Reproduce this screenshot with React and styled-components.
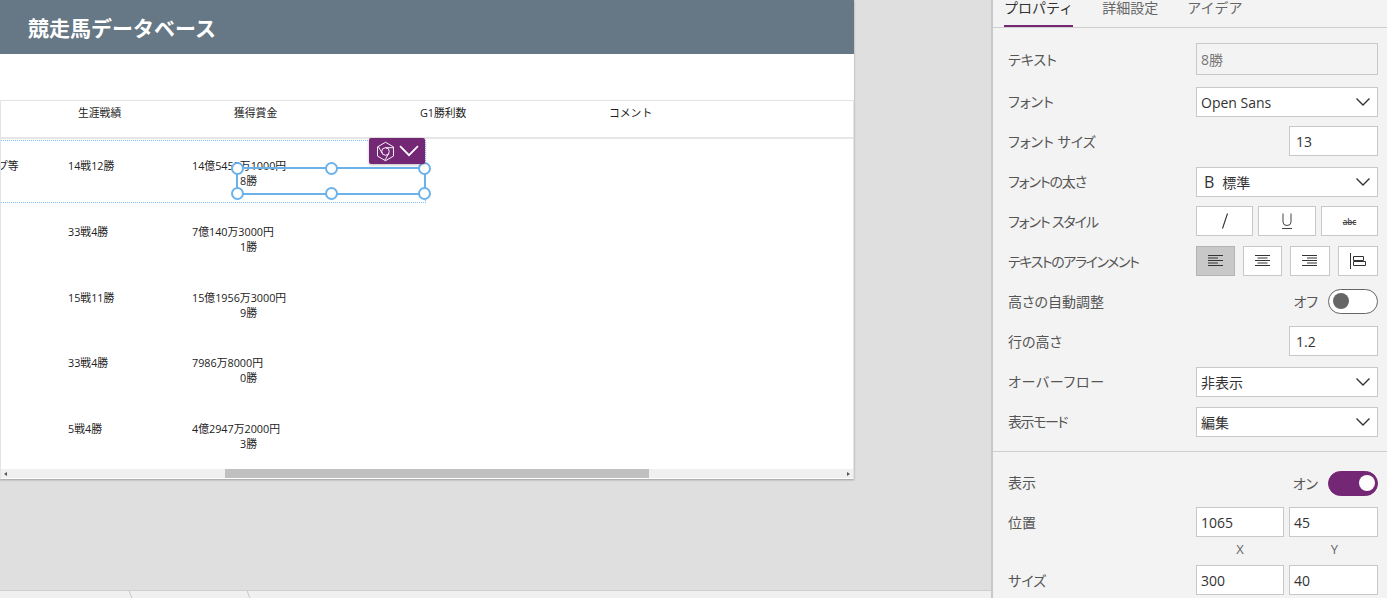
import React from "react";
import styled, { createGlobalStyle } from "styled-components";

const GlobalStyle = createGlobalStyle`
  html, body {
    margin: 0;
    padding: 0;
    height: 100%;
    overflow: hidden;
  }
  body {
    font-family: "Open Sans", "Noto Sans CJK JP", sans-serif;
  }
`;

const horses = [
  { note: "プ等", record: "14戦12勝", money: "14億5455万1000円", wins: "8勝", selected: true },
  { record: "33戦4勝", money: "7億140万3000円", wins: "1勝" },
  { record: "15戦11勝", money: "15億1956万3000円", wins: "9勝" },
  { record: "33戦4勝", money: "7986万8000円", wins: "0勝" },
  { record: "5戦4勝", money: "4億2947万2000円", wins: "3勝" },
];

const Chevron = ({ size = 16, color = "#333", width = 1.4 }) => (
  <svg width={size} height={size} viewBox="0 0 16 16" fill="none">
    <path d="M1.5 4.5 8 11l6.5-6.5" stroke={color} strokeWidth={width} />
  </svg>
);

const AlignIcon = ({ type }) => {
  const lines = {
    left: [[0, 15], [0, 10], [0, 15], [0, 10], [0, 15]],
    center: [[0, 15], [2.5, 12.5], [0, 15], [2.5, 12.5], [0, 15]],
    right: [[0, 15], [5, 15], [0, 15], [5, 15], [0, 15]],
  }[type];
  return (
    <svg width="16" height="14" viewBox="0 0 16 14" fill="none" stroke="#333">
      {lines.map(([a, b], i) => (
        <path key={i} d={`M${a} ${1.5 + i * 2.5}H${b}`} />
      ))}
    </svg>
  );
};

const TopAlignIcon = () => (
  <svg width="17" height="16" viewBox="0 0 17 16" fill="none" stroke="#333">
    <path d="M0.5 0v16M3.5 3.5h10v4h-10zM3.5 8.5h12v4h-12z" />
  </svg>
);

const ItalicIcon = () => (
  <svg width="8" height="16" viewBox="0 0 8 16" fill="none" stroke="#333" strokeWidth="1.1">
    <path d="M6.5 0.5 1.5 15.5" />
  </svg>
);

const UnderlineIcon = () => (
  <svg width="12" height="16" viewBox="0 0 12 16" fill="none" stroke="#444">
    <path d="M2 0.5v8.5q0 3.5 4 3.5t4-3.5V0.5M1 15.5h10" />
  </svg>
);

const BrandIcon = () => (
  <svg width="21" height="21" viewBox="0 0 20 20" fill="none" stroke="#fff" strokeWidth="0.9">
    <path d="M10 1.2 17.6 5.6v8.8L10 18.8 2.4 14.4V5.6z" />
    <circle cx="10" cy="10" r="3.6" />
    <path d="M10 6.4H17.2M6.9 11.8 3.2 5.4M13.1 11.8 9.4 18.3" />
  </svg>
);

export default function App() {
  return (
    <Page>
      <GlobalStyle />
      <Workspace>
        <Screen>
          <Header>競走馬データベース</Header>
          <Gallery>
            <ColumnHeads>
              <HeadCell $w={156}>生涯戦績</HeadCell>
              <HeadCell $w={186}>獲得賞金</HeadCell>
              <HeadCell $w={189}>G1勝利数</HeadCell>
              <HeadCell>コメント</HeadCell>
            </ColumnHeads>
            <Rows>
              {horses.map((h) => (
                <Row key={h.money}>
                  <NoteCell>{h.note}</NoteCell>
                  <RecordCell>{h.record}</RecordCell>
                  <MoneyCell>
                    <div>{h.money}</div>
                    <Wins>{h.wins}</Wins>
                  </MoneyCell>
                  {h.selected && (
                    <>
                      <RowOutline />
                      <Selection>
                        <Handle $x="-1px" $y="-1px" />
                        <Handle $x="50%" $y="-1px" />
                        <Handle $x="100%" $y="-1px" />
                        <Handle $x="-1px" $y="100%" />
                        <Handle $x="50%" $y="100%" />
                        <Handle $x="100%" $y="100%" />
                      </Selection>
                      <Badge>
                        <BrandIcon />
                        <Chevron size={22} color="#fff" width={1.3} />
                      </Badge>
                    </>
                  )}
                </Row>
              ))}
            </Rows>
            <Scrollbar>
              <ArrowLeft />
              <Track>
                <Thumb />
              </Track>
              <ArrowRight />
            </Scrollbar>
          </Gallery>
        </Screen>
        <TabStrip>
          <Tab $w={131} />
          <Tab $w={118} />
        </TabStrip>
      </Workspace>

      <Panel>
        <Tabs>
          <PanelTab $active>プロパティ</PanelTab>
          <PanelTab>詳細設定</PanelTab>
          <PanelTab>アイデア</PanelTab>
        </Tabs>
        <Form>
          <FieldRow $first>
            <Label>テキスト</Label>
            <ReadonlyBox>8勝</ReadonlyBox>
          </FieldRow>
          <FieldRow>
            <Label>フォント</Label>
            <Select>
              Open Sans
              <Chevron />
            </Select>
          </FieldRow>
          <FieldRow>
            <Label>フォント サイズ</Label>
            <NumberBox>13</NumberBox>
          </FieldRow>
          <FieldRow>
            <Label $ls={-1.1}>フォントの太さ</Label>
            <Select>
              <span>
                <WeightB>B</WeightB>標準
              </span>
              <Chevron />
            </Select>
          </FieldRow>
          <FieldRow>
            <Label $ls={-1.1}>フォント スタイル</Label>
            <ButtonGroup $gap={5}>
              <IconButton $w={57}>
                <ItalicIcon />
              </IconButton>
              <IconButton $w={58}>
                <UnderlineIcon />
              </IconButton>
              <IconButton $w={57}>
                <StrikeMark>abc</StrikeMark>
              </IconButton>
            </ButtonGroup>
          </FieldRow>
          <FieldRow>
            <Label $ls={-1.4}>テキストのアラインメント</Label>
            <ButtonGroup $gap={8}>
              <IconButton $w={39} $active>
                <AlignIcon type="left" />
              </IconButton>
              <IconButton $w={39}>
                <AlignIcon type="center" />
              </IconButton>
              <IconButton $w={40}>
                <AlignIcon type="right" />
              </IconButton>
              <IconButton $w={40}>
                <TopAlignIcon />
              </IconButton>
            </ButtonGroup>
          </FieldRow>
          <FieldRow>
            <Label>高さの自動調整</Label>
            <ToggleWrap $up>
              オフ
              <Toggle />
            </ToggleWrap>
          </FieldRow>
          <FieldRow>
            <Label>行の高さ</Label>
            <NumberBox>1.2</NumberBox>
          </FieldRow>
          <FieldRow>
            <Label $ls={0.7}>オーバーフロー</Label>
            <Select>
              非表示
              <Chevron />
            </Select>
          </FieldRow>
          <FieldRow>
            <Label $ls={-1.4}>表示モード</Label>
            <Select>
              編集
              <Chevron />
            </Select>
          </FieldRow>
        </Form>
        <Divider />
        <Form $second>
          <FieldRow>
            <Label>表示</Label>
            <ToggleWrap>
              オン
              <Toggle $on />
            </ToggleWrap>
          </FieldRow>
          <FieldRow>
            <Label>位置</Label>
            <PairBoxes>
              <SmallBox $w={88}>1065</SmallBox>
              <SmallBox $w={89}>45</SmallBox>
            </PairBoxes>
          </FieldRow>
          <AxisRow>
            <span>X</span>
            <span>Y</span>
          </AxisRow>
          <FieldRow>
            <Label>サイズ</Label>
            <PairBoxes>
              <SmallBox $w={88}>300</SmallBox>
              <SmallBox $w={89}>40</SmallBox>
            </PairBoxes>
          </FieldRow>
        </Form>
      </Panel>
    </Page>
  );
}

const Page = styled.div`
  display: flex;
  width: 1387px;
  height: 598px;
  overflow: hidden;
  background: #dfdfdf;
`;

const Workspace = styled.div`
  width: 991px;
  height: 598px;
  flex: none;
  display: flex;
  flex-direction: column;
  justify-content: space-between;
`;

const Screen = styled.div`
  width: 854px;
  height: 479px;
  background: #fff;
  box-shadow: 0 1px 2px rgba(0, 0, 0, 0.3);
  display: flex;
  flex-direction: column;
`;

const Header = styled.div`
  height: 54px;
  flex: none;
  padding-left: 28px;
  background: #667785;
  color: #fff;
  font-size: 21px;
  font-weight: 700;
  line-height: 56px;
  box-sizing: border-box;
`;

const Gallery = styled.div`
  margin-top: 46px;
  flex: 1;
  display: flex;
  flex-direction: column;
  border-left: 1px solid #e4e4e4;
  border-right: 1px solid #e4e4e4;
  border-top: 1px solid #e2e2e2;
  min-height: 0;
  overflow: hidden;
`;

const ColumnHeads = styled.div`
  height: 38px;
  flex: none;
  box-sizing: border-box;
  display: flex;
  padding-left: 77px;
  border-bottom: 2px solid #e6e6e6;
  font-size: 10.8px;
  color: #222;
  line-height: 24px;
`;

const HeadCell = styled.div`
  flex: none;
  width: ${(p) => (p.$w ? `${p.$w}px` : "auto")};
`;

const Rows = styled.div`
  flex: 1;
  min-height: 0;
`;

const Row = styled.div`
  position: relative;
  height: 65.75px;
  display: flex;
  box-sizing: border-box;
  padding-top: 19px;
  font-size: 10.8px;
  line-height: 15px;
  color: #222;
`;

const NoteCell = styled.div`
  width: 71px;
  margin-left: -4px;
  flex: none;
`;

const RecordCell = styled.div`
  width: 124px;
  flex: none;
`;

const MoneyCell = styled.div`
  flex: none;
`;

const Wins = styled.div`
  margin-left: 48px;
`;

const RowOutline = styled.div`
  position: absolute;
  left: -1px;
  top: 1px;
  width: 426px;
  height: 63px;
  border-top: 1px dotted #7fbdf0;
  border-bottom: 1px dotted #7fbdf0;
  border-right: 1px dotted #7fbdf0;
  box-sizing: border-box;
`;

const Selection = styled.div`
  position: absolute;
  left: 235px;
  top: 28px;
  width: 190px;
  height: 28px;
  border: 2px solid #6cb2ea;
  box-sizing: border-box;
`;

const Handle = styled.span`
  position: absolute;
  left: ${(p) => p.$x};
  top: ${(p) => p.$y};
  width: 13px;
  height: 13px;
  margin: -6.5px 0 0 -6.5px;
  border: 2px solid #6cb2ea;
  border-radius: 50%;
  background: #fff;
  box-sizing: border-box;
`;

const Badge = styled.div`
  position: absolute;
  left: 368px;
  top: -1px;
  width: 56px;
  height: 26px;
  background: #742774;
  border-radius: 2px;
  box-shadow: 0 1px 3px rgba(0, 0, 0, 0.25);
  display: flex;
  align-items: center;
  justify-content: center;
  gap: 2px;
`;

const Scrollbar = styled.div`
  height: 9px;
  flex: none;
  background: #f0f0f0;
  display: flex;
  align-items: center;
  justify-content: space-between;
  margin-bottom: 1px;
`;

const ArrowLeft = styled.span`
  margin-left: 3px;
  border-right: 3px solid #555;
  border-top: 2.5px solid transparent;
  border-bottom: 2.5px solid transparent;
`;

const ArrowRight = styled.span`
  margin-right: 3px;
  border-left: 3px solid #555;
  border-top: 2.5px solid transparent;
  border-bottom: 2.5px solid transparent;
`;

const Track = styled.div`
  flex: 1;
  height: 100%;
  padding-left: 218px;
`;

const Thumb = styled.div`
  width: 424px;
  height: 100%;
  background: #c0c0c0;
`;

const TabStrip = styled.div`
  height: 8px;
  flex: none;
  box-sizing: border-box;
  display: flex;
  background: #f0f0f0;
  border-top: 1px solid #cfcfcf;
`;

const Tab = styled.div`
  width: ${(p) => p.$w}px;
  height: 100%;
  box-sizing: border-box;
  border-right: 1px solid #c8c8c8;
  transform: skewX(20deg);
`;

const Panel = styled.div`
  width: 396px;
  height: 598px;
  flex: none;
  box-sizing: border-box;
  border-left: 2px solid #c8c8c8;
  background: #f3f3f3;
  color: #555;
  font-size: 14px;
  font-feature-settings: "palt";
`;

const Tabs = styled.div`
  height: 28px;
  box-sizing: border-box;
  display: flex;
  gap: 29px;
  padding-left: 11px;
  border-bottom: 1px solid #d0d0d0;
  font-feature-settings: normal;
`;

const PanelTab = styled.div`
  height: 27px;
  line-height: 16px;
  box-sizing: border-box;
  color: ${(p) => (p.$active ? "#333" : "#666")};
  border-bottom: ${(p) => (p.$active ? "2px solid #742774" : "none")};
`;

const Form = styled.div`
  padding: ${(p) => (p.$second ? "11px" : "12px")} 9px 0 15px;
  display: flex;
  flex-direction: column;
`;

const FieldRow = styled.div`
  height: 40px;
  flex: none;
  display: flex;
  align-items: center;
  justify-content: space-between;
  margin-bottom: ${(p) => (p.$first ? "2px" : "0")};
`;

const Label = styled.div`
  color: #555;
  white-space: nowrap;
  margin-bottom: 2px;
  letter-spacing: ${(p) => p.$ls || 0}px;
`;

const boxStyle = `
  box-sizing: border-box;
  border: 1px solid #c8c8c8;
  background: #fff;
  color: #333;
  height: 30px;
  display: flex;
  align-items: center;
`;

const ReadonlyBox = styled.div`
  ${boxStyle}
  width: 182px;
  height: 32px;
  margin-bottom: 2px;
  padding-left: 4px;
  background: #f3f3f3;
  color: #777;
`;

const Select = styled.div`
  ${boxStyle}
  width: 182px;
  padding: 0 6px 0 4px;
  justify-content: space-between;
`;

const WeightB = styled.span`
  font-size: 16px;
  margin: 0 8px 0 3px;
`;

const NumberBox = styled.div`
  ${boxStyle}
  width: 89px;
  margin-bottom: 2px;
  padding-left: 6px;
`;

const ButtonGroup = styled.div`
  display: flex;
  margin-bottom: 2px;
  gap: ${(p) => p.$gap}px;
`;

const IconButton = styled.div`
  ${boxStyle}
  width: ${(p) => p.$w}px;
  justify-content: center;
  background: ${(p) => (p.$active ? "#c8c8c8" : "#fff")};
  border-color: ${(p) => (p.$active ? "#b4b4b4" : "#c8c8c8")};
`;

const StrikeMark = styled.span`
  font-size: 8px;
  font-weight: 600;
  color: #444;
  text-decoration: line-through;
`;

const ToggleWrap = styled.div`
  display: flex;
  align-items: center;
  gap: 10px;
  color: #555;
  margin-bottom: ${(p) => (p.$up ? "2px" : "0")};
`;

const Toggle = styled.span`
  position: relative;
  width: 50px;
  height: 25px;
  box-sizing: border-box;
  border-radius: 13px;
  border: 1px solid ${(p) => (p.$on ? "#742774" : "#666")};
  background: ${(p) => (p.$on ? "#742774" : "#fff")};

  &::after {
    content: "";
    position: absolute;
    top: 3.5px;
    left: ${(p) => (p.$on ? "30px" : "3.5px")};
    width: 16px;
    height: 16px;
    border-radius: 50%;
    background: ${(p) => (p.$on ? "#fff" : "#666")};
  }
`;

const PairBoxes = styled.div`
  display: flex;
  gap: 5px;
  margin-bottom: 2px;
`;

const SmallBox = styled.div`
  ${boxStyle}
  width: ${(p) => p.$w}px;
  padding-left: 4px;
`;

const AxisRow = styled.div`
  height: 18px;
  display: flex;
  justify-content: flex-end;
  gap: 87px;
  padding-right: 40px;
  font-size: 13px;
  line-height: 13px;
  color: #666;
`;

const Divider = styled.div`
  height: 1px;
  background: #d0d0d0;
  margin-top: 9px;
`;
